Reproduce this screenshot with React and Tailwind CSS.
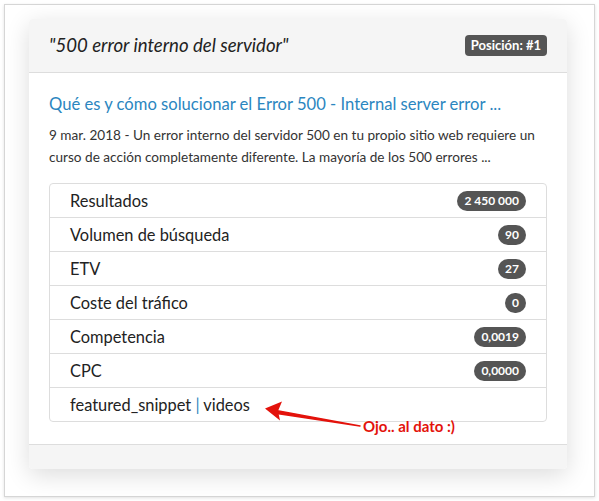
export default function App() {
  const rows = [
    ["Resultados", "2 450 000"],
    ["Volumen de búsqueda", "90"],
    ["ETV", "27"],
    ["Coste del tráfico", "0"],
    ["Competencia", "0,0019"],
    ["CPC", "0,0000"],
  ];
  const font = { fontFamily: "Lato, 'Open Sans', sans-serif" };
  return (
    <div className="w-[599px] h-[501px] bg-white relative pt-[4px] pl-[4px]" style={font}>
      <div className="w-[591px] h-[493px] border border-[#d6d6d6] bg-white shadow-[0_1px_3px_rgba(0,0,0,0.12)] pt-[14px] pl-[24px]">
        <div className="w-[538px] h-[450px] rounded-[4px] bg-white shadow-[0_6px_24px_rgba(0,0,0,0.14)] flex flex-col overflow-hidden">
          <div className="h-[54px] bg-[#f5f5f5] border-b border-[#dddddd] flex items-center justify-between pl-[20px] pr-[20px] shrink-0">
            <span className="italic text-[18.6px] text-[#222]">"500 error interno del servidor"</span>
            <span className="bg-[#555555] text-white font-bold text-[13px] leading-none px-[6px] py-[4px] rounded-[4px]">Posición: #1</span>
          </div>
          <div className="flex-1 px-[20px] pt-[19px]">
            <div className="text-[16.6px] text-[#2b86c0] leading-[24px]">
              Qué es y cómo solucionar el Error 500 - Internal server error ...
            </div>
            <div className="text-[13.6px] text-[#333] leading-[22px] mt-[8px] pr-[10px]">
              9 mar. 2018 - Un error interno del servidor 500 en tu propio sitio web requiere un curso de acción completamente diferente. La mayoría de los 500 errores ...
            </div>
            <div className="mt-[15px] border border-[#dddddd] rounded-[4px]">
              {rows.map(([k, v]) => (
                <div key={k} className="h-[34px] border-b border-[#dddddd] flex items-center justify-between pl-[20px] pr-[20px] pt-[2px]">
                  <span className="text-[16.4px] text-[#222]">{k}</span>
                  <span className="bg-[#555555] text-white font-bold text-[12px] leading-none px-[7px] py-[4px] rounded-full -mt-[2px]">{v}</span>
                </div>
              ))}
              <div className="h-[33px] flex items-center pl-[20px] pt-[2px]">
                <span className="text-[16.4px] text-[#222]">
                  featured_snippet <span className="text-[#2b86c0]">|</span> videos
                </span>
              </div>
            </div>
          </div>
          <div className="h-[25px] bg-[#f5f5f5] border-t border-[#dddddd] shrink-0"></div>
        </div>
      </div>
      <svg className="absolute left-0 top-0" width="599" height="501">
        <path d="M360 426 L276 410.5 L277 413.5 Z" fill="#e3120b" stroke="#e3120b" strokeWidth="1.5" strokeLinejoin="round" />
        <path d="M265 408.5 L282 401.5 L278 411 L280 420.5 Z" fill="#e3120b" />
      </svg>
      <span className="absolute left-[363px] top-[419px] text-[15px] font-bold text-[#e3120b] leading-none">Ojo.. al dato :)</span>
    </div>
  );
}
